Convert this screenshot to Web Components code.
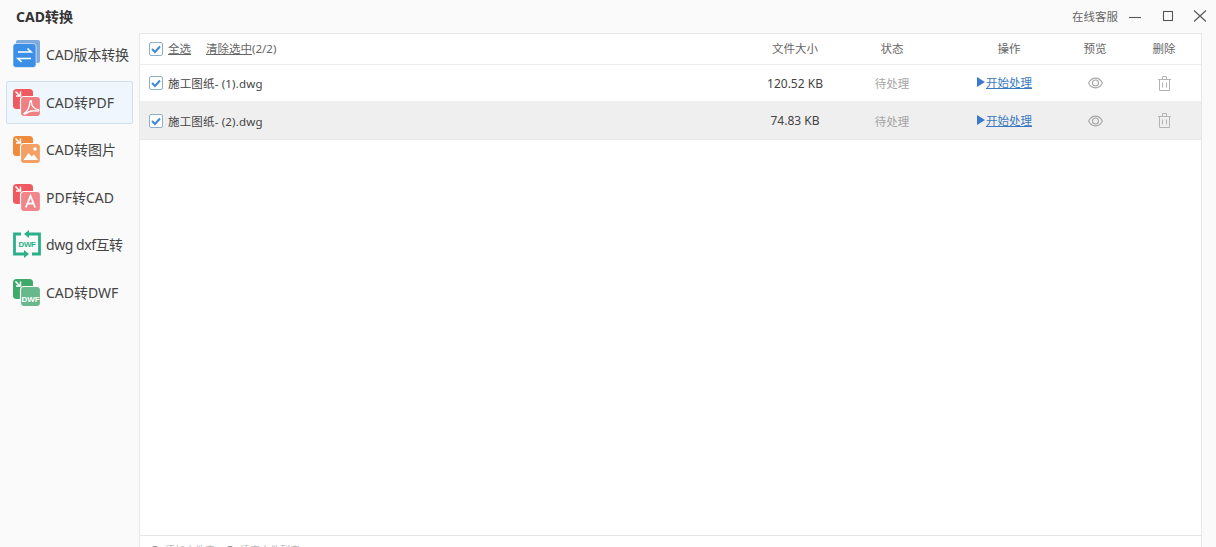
<!DOCTYPE html>
<html lang="zh">
<head>
<meta charset="utf-8">
<title>CAD转换</title>
<style>
  html, body { margin: 0; height: 100%; overflow: hidden; background: #fafafa; }
  body { font-family: "Noto Sans", "Noto Sans CJK SC", sans-serif; color: #333; }
</style>
</head>
<body>
<cad-app>
  <title-bar slot="top" heading="CAD转换"></title-bar>
  <side-nav slot="side">
    <nav-item icon="version" style="letter-spacing: -.15px">CAD版本转换</nav-item>
    <nav-item icon="pdf" active>CAD转PDF</nav-item>
    <nav-item icon="image">CAD转图片</nav-item>
    <nav-item icon="text">PDF转CAD</nav-item>
    <nav-item icon="swap" style="letter-spacing: -.45px">dwg dxf互转</nav-item>
    <nav-item icon="dwf">CAD转DWF</nav-item>
  </side-nav>
  <file-panel slot="main">
    <file-row name="施工图纸- (1).dwg" size="120.52 KB"></file-row>
    <file-row name="施工图纸- (2).dwg" size="74.83 KB" shaded></file-row>
  </file-panel>
</cad-app>

<script>
class CadApp extends HTMLElement {
    constructor() {
        super();
        this.attachShadow({ mode: 'open' });
        this.shadowRoot.innerHTML = `
            <style>
                :host {
                    display: grid;
                    grid-template-columns: 139px 1063px;
                    grid-template-rows: 33px 514px;
                    width: 1216px;
                    height: 547px;
                    overflow: hidden;
                }
                .top { grid-column: 1 / 3; }
            </style>
            <div class="top"><slot name="top"></slot></div>
            <slot name="side"></slot>
            <slot name="main"></slot>
        `;
    }
}

class TitleBar extends HTMLElement {
    constructor() {
        super();
        this.attachShadow({ mode: 'open' });
        this.shadowRoot.innerHTML = `
            <style>
                :host {
                    display: flex;
                    align-items: center;
                    height: 33px;
                    padding: 0 9px 1px 16px;
                    box-sizing: border-box;
                    width: 1216px;
                }
                .name { font-size: 14px; font-weight: 700; color: #333; flex: 1; margin-bottom: 1px; }
                .help { font-size: 11.5px; color: #666; margin: 0 10px 1px 0; }
                svg { display: block; fill: none; stroke: #555; stroke-width: 1.1; }
                .min { margin-right: 19px; }
                .max { margin-right: 18px; }
            </style>
            <div class="name"></div>
            <div class="help">在线客服</div>
            <svg class="min" width="14" height="14"><path d="M1 8.5h12"/></svg>
            <svg class="max" width="14" height="14"><rect x="2.5" y="2.5" width="9" height="9"/></svg>
            <svg width="14" height="14"><path d="M1 1.5l12 11M13 1.5l-12 11"/></svg>
        `;
        this.shadowRoot.querySelector('.name').textContent = this.getAttribute('heading');
    }
}

class SideNav extends HTMLElement {
    constructor() {
        super();
        this.attachShadow({ mode: 'open' });
        this.shadowRoot.innerHTML = `
            <style>
                :host {
                    display: flex;
                    flex-direction: column;
                    gap: 4px;
                    padding: 0 6px;
                    box-sizing: border-box;
                }
            </style>
            <slot></slot>
        `;
    }
}

// back square, front square and the little arrow are the same on the convert icons
const pair = (back, front, glyph) => `
    <rect x="0" y="1" width="20" height="20" rx="3.5" fill="${back}"/>
    <path d="M2.5 3.5l4.5 4.5M7.5 3.5v4.5H3" fill="none" stroke="#fff" stroke-width="1.5"/>
    <rect x="7.5" y="8.5" width="20" height="20" rx="3.5" fill="${front}" stroke="#fafafa" stroke-width="1.2"/>
    ${glyph}
`;

const ICONS = {
    version: `
        <rect x="3" y="0" width="24" height="23" rx="2" fill="#7eaadd"/>
        <rect x="0" y="3.5" width="23" height="24" rx="3" fill="#3c8fe6" stroke="#fafafa" stroke-width=".6"/>
        <path d="M5 12h13l-3.5-3.5M18 18.5H5l3.5 3.5" fill="none" stroke="#fff" stroke-width="1.7"/>
    `,
    pdf: pair('#ee5a5f', '#ef7f83', `
        <path d="M11 25.5c3.5-1.8 5.5-6.5 6-12 .2-1.5 1.7-1.2 1.5.6-.4 3.4 2.5 7 6.5 7.6 1.4.3 1 1.7-.6 1.4-4.2-.8-8.800.1-11.400 2.500-1 .9-2.400.4-2-.1z" fill="none" stroke="#fff" stroke-width="1.3"/>
    `),
    image: pair('#f08a3c', '#f4a064', `
        <path d="M10.5 25l5-7 3 3.5 2.5-2 4 5.5z" fill="#fff"/>
        <circle cx="22" cy="14" r="1.8" fill="#fff"/>
    `),
    text: pair('#ee5a5f', '#f2858a', `
        <path d="M12.8 24.5l4.7-11.500 4.700 11.500M14.500 20.500h6" fill="none" stroke="#fff" stroke-width="1.8"/>
    `),
    swap: `
        <path d="M8 4H1.500v20H11M19 24h7.500V4H16" fill="none" stroke="#2cb08a" stroke-width="2.8"/>
        <path d="M11 20l5 4-5 4zM16 0l-5 4 5 4z" fill="#2cb08a"/>
        <text x="14" y="17" font-family="Liberation Sans" font-size="8" font-weight="700" fill="#2cb08a" text-anchor="middle">DWF</text>
    `,
    dwf: pair('#3eaa6b', '#67b88a', `
        <text x="17.5" y="23.5" font-family="Liberation Sans" font-size="8" font-weight="700" fill="#fff" text-anchor="middle">DWF</text>
    `)
};

class NavItem extends HTMLElement {
    constructor() {
        super();
        this.attachShadow({ mode: 'open' });
        this.shadowRoot.innerHTML = `
            <style>
                :host {
                    display: flex;
                    align-items: center;
                    gap: 5px;
                    height: 43.5px;
                    padding-left: 6px;
                    box-sizing: border-box;
                    border: 1px solid transparent;
                    font-size: 14px;
                    color: #444;
                    white-space: nowrap;
                }
                :host([active]) {
                    background: #eff6fd;
                    border-color: #cfe0f0;
                    border-radius: 2px;
                }
                svg { display: block; flex: none; }
                span { margin-bottom: 1px; }
            </style>
            <svg width="28" height="29" viewBox="0 0 28 29">${ICONS[this.getAttribute('icon')]}</svg>
            <span><slot></slot></span>
        `;
    }
}

class CheckMark extends HTMLElement {
    constructor() {
        super();
        this.attachShadow({ mode: 'open' });
        this.shadowRoot.innerHTML = `
            <style>
                :host { display: block; width: 14px; height: 14px; flex: none; }
                svg { display: block; }
            </style>
            <svg width="14" height="14">
                <rect x="0.5" y="0.5" width="13" height="13" rx="1.5" fill="#fff" stroke="#8fb0cc"/>
                <path d="M3 7l3 3 5-5.500" fill="none" stroke="#3f88d2" stroke-width="2"/>
            </svg>
        `;
    }
}

const COLUMNS = `
    display: grid;
    grid-template-columns: 1fr 62px 132px 102px 70px 68px;
    align-items: center;
    padding: 0 3px 0 9px;
    box-sizing: border-box;
`;

class FileRow extends HTMLElement {
    constructor() {
        super();
        this.attachShadow({ mode: 'open' });
        this.shadowRoot.innerHTML = `
            <style>
                :host {
                    ${COLUMNS}
                    height: 38px;
                    background: #fff;
                    font-size: 11.5px;
                    color: #444;
                    border-bottom: 1px solid #f0f0f0;
                }
                :host(:first-child) { height: 37px; }
                :host([shaded]) { background: #efefef; border-bottom-color: #e9e9e9; }
                .name { display: flex; align-items: center; gap: 5px; letter-spacing: .17px; }
                .cell { display: flex; justify-content: center; white-space: nowrap; }
                .size { font-size: 12px; }
                .wait { color: #a5a5a5; }
                .go { color: #3a78c2; text-decoration: underline; align-items: center; margin: 0 9px 2px 0; }
                .go svg { margin-right: 1px; }
                svg { display: block; }
            </style>
            <div class="name"><check-mark></check-mark><span class="file"></span></div>
            <div class="cell size"></div>
            <div class="cell wait">待处理</div>
            <div class="cell go"><svg width="8" height="10"><path d="M0 0l8 5-8 5z" fill="#3a78d2"/></svg>开始处理</div>
            <div class="cell">
                <svg width="15" height="12" viewBox="0 0 15 12" fill="none" stroke="#a8a8a8" stroke-width="1.1">
                    <path d="M.6 6c3.200-6.500 10.600-6.500 13.800 0-3.200 6.500-10.600 6.500-13.800 0z"/>
                    <circle cx="7.5" cy="6" r="3"/>
                </svg>
            </div>
            <div class="cell">
                <svg width="13" height="15" viewBox="0 0 13 15" fill="none" stroke="#b4b4b4">
                    <path d="M0 3.500h13M4.500 3V.5h4V3M1.500 3.500v11h10v-11M4.500 6.500v5M8.500 6.500v5"/>
                </svg>
            </div>
        `;
        this.shadowRoot.querySelector('.file').textContent = this.getAttribute('name');
        this.shadowRoot.querySelector('.size').textContent = this.getAttribute('size');
    }
}

class FilePanel extends HTMLElement {
    constructor() {
        super();
        this.attachShadow({ mode: 'open' });
        this.shadowRoot.innerHTML = `
            <style>
                :host {
                    display: flex;
                    flex-direction: column;
                    height: 514px;
                    background: #fff;
                    border: 1px solid #e8e8e8;
                    border-bottom: 0;
                    box-sizing: border-box;
                }
                .head {
                    ${COLUMNS}
                    height: 31px;
                    flex: none;
                    font-size: 11.5px;
                    color: #666;
                    border-bottom: 1px solid #ececec;
                    padding-bottom: 1px;
                }
                .tools { display: flex; align-items: center; }
                .tools check-mark { margin-right: 5px; }
                .tools u { margin: 0 15px 2px 0; }
                .tools span { margin-bottom: 2px; }
                .tools span u { margin: 0; }
                .cell { text-align: center; white-space: nowrap; margin-bottom: 2px; }
                .list { flex: 1; }
                .foot {
                    height: 12px;
                    flex: none;
                    box-sizing: border-box;
                    border-top: 1px solid #e6e6e6;
                    padding: 7px 0 0 10px;
                    display: flex;
                    gap: 10px;
                    font-size: 10px;
                    line-height: 14px;
                    color: #bbb;
                    white-space: nowrap;
                    overflow: hidden;
                }
                .foot i {
                    display: inline-block;
                    width: 10px;
                    height: 10px;
                    border-radius: 50%;
                    background: #888;
                    margin-right: 5px;
                    vertical-align: -2px;
                }
            </style>
            <div class="head">
                <div class="tools">
                    <check-mark></check-mark>
                    <u>全选</u>
                    <span><u>清除选中</u>(2/2)</span>
                </div>
                <div class="cell">文件大小</div>
                <div class="cell">状态</div>
                <div class="cell">操作</div>
                <div class="cell">预览</div>
                <div class="cell">删除</div>
            </div>
            <div class="list"><slot></slot></div>
            <div class="foot">
                <span><i></i>添加文件夹</span>
                <span><i></i>清空文件列表</span>
            </div>
        `;
    }
}

customElements.define('check-mark', CheckMark);
customElements.define('cad-app', CadApp);
customElements.define('title-bar', TitleBar);
customElements.define('side-nav', SideNav);
customElements.define('nav-item', NavItem);
customElements.define('file-row', FileRow);
customElements.define('file-panel', FilePanel);
</script>
</body>
</html>
